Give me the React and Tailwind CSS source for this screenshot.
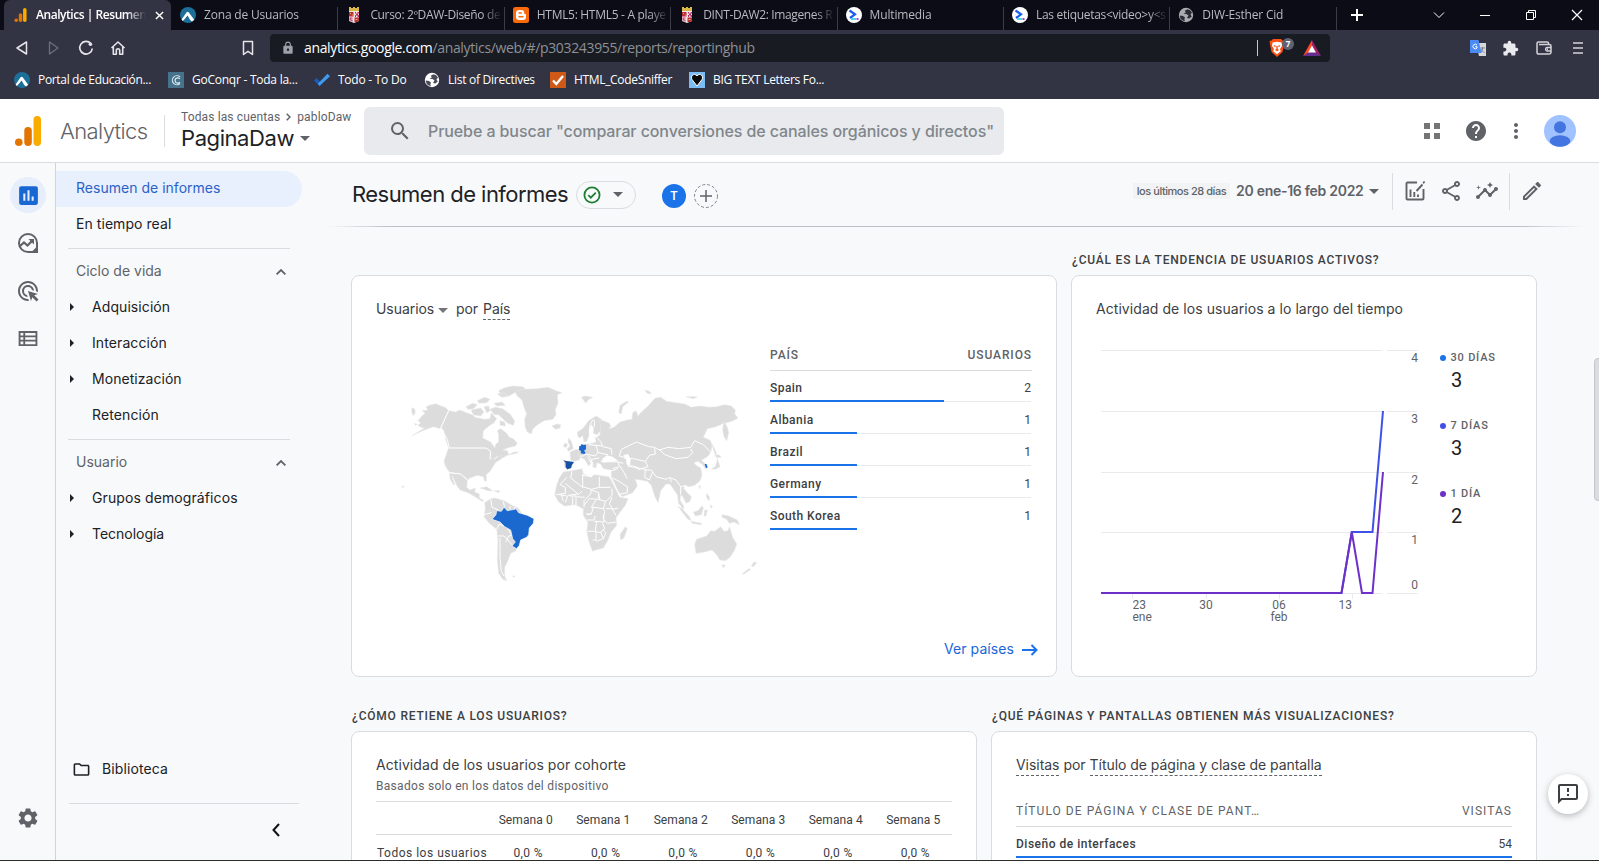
import React from "react";
import {
  MdSearch, MdHelp, MdMoreVert, MdSettings, MdOutlineShare, MdOutlineEdit, MdOutlineFeedback,
  MdAdsClick, MdInsights, MdInsertChart, MdExtension, MdLock, MdOutlineFolder,
} from "react-icons/md";

/* ---------- favicons ---------- */
const AnalyticsMark = ({ className }) => (
  <svg viewBox="0 0 26 30" className={className}>
    <rect x="18.5" y="0" width="7.5" height="30" rx="3.7" fill="#f9ab00" />
    <rect x="9.3" y="11" width="7.5" height="19" rx="3.7" fill="#e37400" />
    <circle cx="3.8" cy="26.2" r="3.8" fill="#e37400" />
  </svg>
);
const Portal = () => (
  <svg viewBox="0 0 16 16" className="size-4 shrink-0">
    <circle cx="8" cy="8" r="8" fill="#1c6f99" />
    <path d="M1.6 12.6 6.6 5.3Q7.6 4 8.7 5.3L14.2 12.8 12 14.6Q9.500 12.500 8.600 10.200L7.600 8.600Q5 12 2.800 14Z" fill="#fff" />
  </svg>
);
const Crest = () => (
  <svg viewBox="0 0 16 16" className="size-4 shrink-0">
    <path d="M3 0h2v1h2V0h2v1h2V0h2v4H3z" fill="#d9b84a" />
    <path d="M3 4h10v10l-5 2-5-2z" fill="#f3e7e2" />
    <path d="M3 5h4.500v4.500H3zM8.500 10.500H13v3l-2 1.500H8.500z" fill="#b92b3b" />
    <path d="M9 5h1v1.500h1.500V5H13v1.500h-1V8h1v2h-1.500V8.500H10V10H9V8h1V6.500H9zM3.500 10.500h3v1h-2v1h2v2h-1v-1h-2z" fill="#b92b6a" />
    <path d="M4 6h1v1H4zM5.800 7.500h1v1h-1zM9.500 12h2v1h-2z" fill="#e8b640" />
  </svg>
);
const Blogger = () => (
  <svg viewBox="0 0 16 16" className="size-4 shrink-0">
    <rect width="16" height="16" rx="2.500" fill="#fb6a0a" />
    <path d="M6 3h2.500a2.700 2.700 0 0 1 2.700 2.700c0 1 .3 1.200 1 1.200.6 0 .8.300.8.900V10a3 3 0 0 1-3 3H6a3 3 0 0 1-3-3V6a3 3 0 0 1 3-3z" fill="#fff" />
    <path d="M6 6h2.300M6 9.800h4" stroke="#fb6a0a" strokeWidth="1.400" strokeLinecap="round" />
  </svg>
);
const Prompt = () => (
  <svg viewBox="0 0 16 16" className="size-4 shrink-0">
    <circle cx="8" cy="8" r="8" fill="#fff" />
    <path d="M3.500 3.500 9 7.300 4 11" fill="none" stroke="#1b5cf0" strokeWidth="2.200" />
    <path d="M5 12h5" stroke="#35d6e0" strokeWidth="1.800" />
    <path d="M10.500 12h2" stroke="#9b2ff0" strokeWidth="1.800" />
  </svg>
);
const Conqr = () => (
  <svg viewBox="0 0 16 16" className="size-4 shrink-0">
    <rect width="16" height="16" fill="#47728c" />
    <path d="M12 5A4.500 4.500 0 1 0 12 11.500M11.800 7A2.600 2.600 0 1 0 11.800 10" fill="none" stroke="#dce8ee" strokeWidth="1.200" />
  </svg>
);
const Todo = () => (
  <svg viewBox="0 0 16 16" className="size-4 shrink-0">
    <path d="M0 8.500 2.500 6 8 11.500 5.500 14z" fill="#1d5bb5" />
    <path d="M5.500 14 3.800 11.800 13.500 1.800 16 4.200z" fill="#3e9bf2" />
  </svg>
);
const Sniffer = () => (
  <svg viewBox="0 0 16 16" className="size-4 shrink-0">
    <rect width="16" height="16" fill="#cf5a18" />
    <path d="M3 8.500 6.300 12 13 4" fill="none" stroke="#fff" strokeWidth="2.400" />
  </svg>
);
const Heart = () => (
  <svg viewBox="0 0 16 16" className="size-4 shrink-0">
    <rect width="16" height="16" fill="#7bbcf5" />
    <path d="M8 14 3 7.500C1 4 5 .5 8 3.800 11 .5 15 4 13 7.500z" fill="#0a0a0a" stroke="#fff" strokeWidth="1" />
  </svg>
);
const Globe = ({ disc, ground }) => (
  <svg viewBox="0 0 16 16" className="size-4 shrink-0">
    <circle cx="8" cy="8" r="7.200" className={disc} />
    <path d="M9.500 2.200 6.800 3.800 7.800 5.500 5.500 7H8.500L10.500 8.500 9 11 11.300 11.500 13.800 9.500 12.500 7.500 14 5.500A6.500 6.500 0 0 0 9.500 2.200zM1.800 8.500 5 9 7 10.500 6.300 12.500 7 14.300A6.300 6.300 0 0 1 1.800 8.500z" className={ground} />
  </svg>
);

const tabs = [
  { icon: <Portal />, text: "Zona de Usuarios", cls: "tracking-[-0.18px]" },
  { icon: <Crest />, text: "Curso: 2ºDAW-Diseño de", cls: "tracking-[-0.35px]" },
  { icon: <Blogger />, text: "HTML5: HTML5 - A playe", cls: "tracking-[-0.3px]" },
  { icon: <Crest />, text: "DINT-DAW2: Imagenes R", cls: "tracking-[-0.36px]" },
  { icon: <Prompt />, text: "Multimedia", cls: "tracking-[-0.15px]" },
  { icon: <Prompt />, text: "Las etiquetas<video>y<s", cls: "tracking-[-0.3px]" },
  { icon: <Globe disc="fill-[#a9abb0]" ground="fill-[#2a2b33]" />, text: "DIW-Esther Cid", cls: "tracking-[-0.2px]" },
];

function TabStrip() {
  return (
    <div className="flex h-[30px] bg-[#0b0c15] pl-1 text-xs">
      <div className="mr-px flex w-[167px] items-center rounded-t-md bg-[#323443] pl-[10px]">
        <AnalyticsMark className="h-[14px] w-[13px]" />
        <span className="ml-[9px] w-[110px] whitespace-nowrap font-semibold tracking-[-0.45px] text-white [mask-image:linear-gradient(to_right,black_82%,transparent)]">Analytics | Resumen</span>
        <svg viewBox="0 0 10 10" className="ml-[9px] size-[9px] stroke-white" strokeWidth="1.600"><path d="M1 1l8 8M9 1 1 9" /></svg>
      </div>
      {tabs.map((t, i) => (
        <div key={i} className="flex w-[166.400px] items-center">
          <div className="flex h-full flex-1 items-center pl-[8px]">
            {t.icon}
            <span className={`ml-2 w-[132px] whitespace-nowrap text-[#b9bac0] [mask-image:linear-gradient(to_right,black_85%,transparent)] ${t.cls}`}>{t.text}</span>
          </div>
          <div className="mt-[7px] h-[23px] w-px bg-[#3c3d44]" />
        </div>
      ))}
      <div className="flex flex-1 items-center pl-[14px] text-white">
        <svg viewBox="0 0 12 12" className="size-3 stroke-white" strokeWidth="2"><path d="M6 0v12M0 6h12" /></svg>
        <svg viewBox="0 0 12 12" className="ml-[70px] size-3" fill="none" stroke="#fff"><path d="M1 3.500 6 8.500 11 3.500" /></svg>
        <svg viewBox="0 0 12 12" className="ml-[34px] size-3" stroke="#fff"><path d="M1 6.500h10" /></svg>
        <svg viewBox="0 0 12 12" className="ml-[34px] size-3" fill="none" stroke="#fff"><path d="M1.500 3.500h7v7h-7zM3.500 3.500v-2h7v7h-2" /></svg>
        <svg viewBox="0 0 12 12" className="ml-[34px] size-3" stroke="#fff" strokeWidth="1.200"><path d="M1 1l10 10M11 1 1 11" /></svg>
      </div>
    </div>
  );
}

function Toolbar() {
  return (
    <div className="flex h-[36px] items-center bg-[#323443] pl-[14px]">
      <svg viewBox="0 0 16 16" className="size-4" fill="none" stroke="#e4e5e9" strokeWidth="1.500" strokeLinejoin="round"><path d="M12.500 2v12L3 8z" /></svg>
      <svg viewBox="0 0 16 16" className="ml-4 size-4" fill="none" stroke="#6d6f7b" strokeWidth="1.300" strokeLinejoin="round"><path d="M3.500 2v12L12 8z" /></svg>
      <svg viewBox="0 0 16 16" className="ml-4 size-4" fill="none" stroke="#e4e5e9" strokeWidth="1.700"><path d="M12.800 3.600A6.300 6.300 0 1 0 14.300 8.500" /><circle cx="12.400" cy="4.200" r="1.800" fill="#e4e5e9" stroke="none" /></svg>
      <svg viewBox="0 0 16 16" className="ml-4 size-4" fill="none" stroke="#e4e5e9" strokeWidth="1.600" strokeLinejoin="round"><path d="M1.500 8 8 2l6.500 6M3.300 7v7.200h3V10.500a1.700 1.700 0 0 1 3.400 0v3.700h3V7" /></svg>
      <svg viewBox="0 0 12 16" className="ml-[116px] h-4 w-3" fill="none" stroke="#e4e5e9" strokeWidth="1.500" strokeLinejoin="round"><path d="M1.500 1.500h9v13L6 11.300l-4.500 3.200z" /></svg>
      <div className="ml-[16px] flex h-7 w-[1060px] items-center rounded bg-[#191b22] pl-[11px]">
        <MdLock className="size-[14px] text-[#9da0a8]" />
        <span className="ml-[9px] whitespace-nowrap text-sm tracking-[-0.35px] text-[#8d9097]"><span className="text-white">analytics.google.com</span>/analytics/web/#/p303243955/reports/reportinghub</span>
        <div className="ml-auto h-4 w-px bg-[#c6c7ca]" />
        <div className="relative ml-[11px] h-[18px] w-[16px]">
          <svg viewBox="0 0 16 18" className="h-[18px] w-4">
            <path d="M4 0h8l1.500 1.500L15.500 2 15 5.500 13.500 13 8 18 2.500 13 1 5.500.5 2l2-.5z" fill="#fb4f14" />
            <path d="M3.500 3.500 8 2.700l4.500.8L13 7l-2 3 .8 2.300L8 15.300 4.200 12.300 5 10 3 7z" fill="#fff" />
            <path d="M4.500 6l2.500.7L6 8.500zM11.500 6 9 6.700l1 1.800zM7.300 7h1.400v3l1.300 1-2 1.300L6 11l1.300-1z" fill="#fb4f14" />
          </svg>
          <span className="absolute left-[13px] top-[-1px] flex h-[12px] w-[12px] items-center justify-center rounded-full bg-[#5f6273] text-[8px] font-bold text-white">7</span>
        </div>
        <svg viewBox="0 0 18 16" className="ml-[18px] mr-[9px] h-4 w-[18px]">
          <path d="M9 0 0 16l9-5z" fill="#ff4724" /><path d="M9 0l9 16-9-5z" fill="#9e1f63" /><path d="M0 16h18l-9-6z" fill="#662d91" /><path d="M9 5.500 5 12.500h8z" fill="#fff" />
        </svg>
      </div>
      <svg viewBox="0 0 16 16" className="ml-[140px] size-4">
        <path d="M6 3h10v13H9z" fill="#d5d7da" /><path d="M0 0h8.500l3 13H0z" fill="#4c8bf5" />
        <path d="M7 5A2.300 2.300 0 1 0 7 8V6.700H5.200" fill="none" stroke="#fff" /><path d="M10.500 8H15M12.700 7v1c0 2-1 3.500-2 4.500M11 9c1 2 2 3 3.500 3.500" stroke="#697079" fill="none" strokeWidth=".8" />
      </svg>
      <MdExtension className="ml-[16px] size-[17px] text-[#e9eaed]" />
      <svg viewBox="0 0 16 16" className="ml-[17px] size-4" fill="none" stroke="#d3d4d9" strokeWidth="1.500"><path d="M12.500 4.500V3.300A1.300 1.300 0 0 0 11.200 2H2.500A1.500 1.500 0 0 0 1 3.500v8.700A1.800 1.800 0 0 0 2.800 14h10.400a1.800 1.800 0 0 0 1.800-1.800V6a1.500 1.500 0 0 0-1.500-1.500H3M15 7.500h-4a1.800 1.800 0 0 0 0 3.500h4M11 9.200h1" /></svg>
      <svg viewBox="0 0 10 12" className="ml-[21px] h-3 w-[10px]" stroke="#d3d4d9" strokeWidth="1.700"><path d="M0 1h10M0 6h10M0 11h10" /></svg>
    </div>
  );
}

const marks = [
  [<Portal />, "Portal de Educación...", "w-[154px]", "tracking-[-0.33px]"],
  [<Conqr />, "GoConqr - Toda la...", "w-[146px]", "tracking-[-0.25px]"],
  [<Todo />, "Todo - To Do", "w-[110px]", "tracking-[-0.25px]"],
  [<Globe disc="fill-white" ground="fill-[#4a4c59]" />, "List of Directives", "w-[126px]", "-ml-px tracking-[-0.27px]"],
  [<Sniffer />, "HTML_CodeSniffer", "w-[139px]", "tracking-[-0.33px]"],
  [<Heart />, "BIG TEXT Letters Fo...", "w-[150px]", "tracking-[-0.3px]"],
];

/* ---------- Analytics chrome ---------- */
const Caret = ({ className }) => (
  <svg viewBox="0 0 10 5" className={`h-[5px] w-[10px] shrink-0 ${className}`}><path d="M0 0h10L5 5z" fill="currentColor" /></svg>
);

function AppHeader() {
  return (
    <header className="flex h-16 shrink-0 items-center border-b border-[#dadce0] bg-white pl-[15px]">
      <AnalyticsMark className="h-[30px] w-[26px]" />
      <span className="ml-[19px] mt-px w-[88px] whitespace-nowrap text-[22px] font-[350] tracking-[-0.6px] text-[#5f6368]">Analytics</span>
      <div className="ml-[16px] h-8 w-px bg-[#dadce0]" />
      <div className="ml-[16px] flex w-[183px] flex-col">
        <div className="flex h-4 items-center whitespace-nowrap font-[Roboto] text-xs tracking-[0.13px] text-[#5f6368]">
          Todas las cuentas
          <svg viewBox="0 0 5 8" className="mx-[6px] h-2 w-[5px]" fill="none" stroke="#5f6368" strokeWidth="1.500"><path d="M.7.700 4 4 .7 7.300" /></svg>
          pabloDaw
        </div>
        <div className="flex h-7 items-center pb-px text-[22px] leading-7 font-[380] tracking-[-0.42px] text-[#202124]">
          <span className="w-[112px] whitespace-nowrap">PaginaDaw</span>
          <Caret className="ml-[7px] mt-px text-[#5f6368]" />
        </div>
      </div>
      <div className="flex h-12 w-[640px] items-center rounded-md bg-[#e8eaed] pl-[24px]">
        <MdSearch className="size-6 text-[#5f6368]" />
        <span className="ml-[16px] whitespace-nowrap text-base font-medium tracking-[-0.09px] text-[#80868b]">Pruebe a buscar "comparar conversiones de canales orgánicos y directos"</span>
      </div>
      <svg viewBox="0 0 16 16" className="ml-[420px] size-4" fill="#757575"><path d="M0 0h6v6H0zM10 0h6v6h-6zM0 10h6v6H0zM10 10h6v6h-6z" /></svg>
      <MdHelp className="ml-6 size-6 text-[#5f6368]" />
      <MdMoreVert className="ml-4 size-6 text-[#5f6368]" />
      <svg viewBox="0 0 32 32" className="ml-4 size-8">
        <circle cx="16" cy="16" r="16" fill="#a0c3ff" />
        <circle cx="16" cy="12.300" r="6" fill="#4374e0" />
        <ellipse cx="16" cy="26" rx="10.300" ry="5.800" fill="#4374e0" />
      </svg>
    </header>
  );
}

function Rail() {
  return (
    <div className="flex w-14 shrink-0 flex-col items-center border-r border-[#d0d3d7] pt-[14px] pl-px">
      <div className="flex size-9 items-center justify-center rounded-full bg-[#e6eefb]"><MdInsertChart className="size-[25px] text-[#1967d2]" /></div>
      <svg viewBox="0 0 24 24" className="mt-[18px] size-6" fill="none" stroke="#5f6368" strokeWidth="2">
        <path d="M12 3a9 9 0 1 0 0 18h9v-9a9 9 0 0 0-9-9z" /><path d="m4 15 4-3.500 3.500 3L17 9" strokeWidth="2.300" /><path d="M12.500 8H18v5.500z" fill="#5f6368" stroke="none" /><path d="M21 17v4h-4z" fill="#5f6368" />
      </svg>
      <MdAdsClick className="mt-[24px] size-6 text-[#5f6368]" />
      <svg viewBox="0 0 20 16" className="mt-[28px] h-[15px] w-5" fill="none" stroke="#5f6368" strokeWidth="2"><path d="M1 1h18v14H1zM1 5.700h18M1 10.300h18M6 1v14" /></svg>
      <MdSettings className="mt-auto mb-[31px] size-6 text-[#5f6368]" />
    </div>
  );
}

const Item = ({ text, arrow, w }) => (
  <div className="flex h-9 items-center pl-[14px] pb-[2px]">
    <svg viewBox="0 0 4 8" className="h-2 w-1">{arrow && <path d="M0 0l4 4-4 4z" fill="#202124" />}</svg>
    <span className={`ml-[18px] ${w}`}>{text}</span>
  </div>
);
const Group = ({ text }) => (
  <div className="flex h-9 w-[235px] items-center justify-between pl-5 pb-[2px] text-[#5f6368]">
    {text}
    <svg viewBox="0 0 10 6" className="mr-[5px] mt-px h-[6px] w-[10px]" fill="none" stroke="#5f6368" strokeWidth="1.800"><path d="M.6 5.400 5 1 9.400 5.400" /></svg>
  </div>
);

function Nav() {
  return (
    <nav className="flex w-[256px] shrink-0 flex-col whitespace-nowrap pt-2 text-sm text-[#202124]">
      <div className="flex h-9 w-[246px] items-center rounded-r-full bg-[#e8f0fe] pl-5 pb-[2px] tracking-[0.02px] text-[#2a62c9]">Resumen de informes</div>
      <div className="flex h-9 items-center pl-5 pb-[2px] tracking-[0.06px]">En tiempo real</div>
      <div className="ml-3 mt-[5px] mb-[5px] h-px w-[222px] bg-[#dadce0]" />
      <Group text="Ciclo de vida" />
      <Item text="Adquisición" arrow w="tracking-[0.08px]" />
      <Item text="Interacción" arrow w="tracking-[0.1px]" />
      <Item text="Monetización" arrow w="tracking-[0.05px]" />
      <Item text="Retención" w="tracking-[0.12px]" />
      <div className="ml-3 mt-[5px] mb-[5px] h-px w-[222px] bg-[#dadce0]" />
      <Group text="Usuario" />
      <Item text="Grupos demográficos" arrow w="tracking-[0.1px]" />
      <Item text="Tecnología" arrow w="tracking-[-0.02px]" />
      <div className="mt-auto flex h-6 items-center pl-4">
        <MdOutlineFolder className="size-[19px]" />
        <span className="ml-[11px] tracking-[0.12px]">Biblioteca</span>
      </div>
      <div className="ml-[13px] mt-[22px] h-px w-[230px] bg-[#dadce0]" />
      <svg viewBox="0 0 8 14" className="mt-[19px] mb-[24px] ml-[216px] h-[14px] w-2" fill="none" stroke="#111" strokeWidth="2"><path d="M7 1 1.500 7 7 13" /></svg>
    </nav>
  );
}

function ReportHeader() {
  return (
    <div className="flex h-[63px] shrink-0 items-center pl-[40px]">
      <span className="w-[215px] whitespace-nowrap text-[22px] font-[380] tracking-[-0.54px] text-[#202124]">Resumen de informes</span>
      <div className="ml-[9px] flex h-7 w-[60px] items-center rounded-full border border-[#dadce0] pl-[6px]">
        <svg viewBox="0 0 18 18" className="size-[18px]" fill="none" stroke="#1e7e34" strokeWidth="1.800"><circle cx="9" cy="9" r="7.600" /><path d="m5.300 9.200 2.500 2.500 5-5" /></svg>
        <Caret className="ml-[12px] text-[#5f6368]" />
      </div>
      <div className="ml-[26px] mt-[2px] flex size-6 items-center justify-center rounded-full bg-[#1a73e8] text-xs font-semibold text-white">T</div>
      <svg viewBox="0 0 24 24" className="ml-2 mt-[2px] size-6" fill="none" stroke="#80868b"><circle cx="12" cy="12" r="11.500" strokeDasharray="3 2" /><path d="M12 6v12M6 12h12" stroke="#5f6368" strokeWidth="1.500" /></svg>
      <div className="ml-auto flex items-center pb-[7px]">
        <span className="flex h-4 w-[97px] items-center justify-center whitespace-nowrap bg-[#f1f3f4] text-[11px] font-medium leading-4 tracking-[-0.45px] text-[#5f6368]">los últimos 28 días</span>
        <span className="ml-[6px] w-[128px] whitespace-nowrap text-sm font-semibold tracking-[-0.28px] text-[#5f6368]">20 ene-16 feb 2022</span>
        <Caret className="ml-[5px] mr-px text-[#5f6368]" />
        <div className="ml-[12px] h-[37px] w-px bg-[#dadce0]" />
        <svg viewBox="0 0 20 20" className="ml-[12px] size-5" fill="none" stroke="#5f6368" strokeWidth="1.900"><path d="M12 1.500H2.500A1 1 0 0 0 1.500 2.500v15a1 1 0 0 0 1 1h15a1 1 0 0 0 1-1V8M5.500 8.500V16M9.300 11v5M13 13.500V16M11.500 10 17.500 3.500" /><path d="m17.500 1 2-1 .5 1.500-1.500 1.500z" fill="#5f6368" stroke="none" /></svg>
        <MdOutlineShare className="ml-[14px] size-6 text-[#5f6368]" />
        <MdInsights className="ml-[12px] size-6 text-[#5f6368]" />
        <div className="ml-[10px] h-[37px] w-px bg-[#dadce0]" />
        <MdOutlineEdit className="ml-[10px] mr-[55px] size-6 text-[#5f6368]" />
      </div>
    </div>
  );
}

/* ---------- world map ---------- */
const land = [
  "M66 227 98 212 130 200 152 206 176 152 165 142 148 136 138 131 120 135 108 141 114 150 96 152 106 160 98 166 84 182 92 188 84 196 96 203 104 204z",
  "M66 143l8 4 2 12-7 8-4-14zM74 190l8 4-6 2z",
  "M176 152 198 156 208 150 234 160 250 166 254 172 284 178 300 176 304 158 312 168 320 176 312 188 300 196 280 212 278 234 302 246 314 264 318 252 326 246 326 222 322 212 332 206 350 220 358 232 370 236 382 250 376 258 352 264 338 270 352 272 356 284 372 276 386 276 378 280 352 286 326 300 322 288 310 298 298 304 302 280 288 270 176 264 168 240 162 212 154 204z",
  "M228 140l20-10 14 4-12 12-16 2zM244 150l28-6 10 12-10 12-22-4zM262 122l22-10 16 6-10 10-22 2zM326 92l16-8 26-6 30 2 8 6-28 10-22 12-20 4 12-10-18-2zM312 130l24-4 10 10-26 2zM300 148l16-6 22 4 24 18 12 20-4 12-16-6-14-12-14-14-12 0zM330 182l14 4 2 12-16-2zM282 140l14-2 4 14-10 6zM322 102l20-4 12 8-18 6z",
  "M376 94 400 88 440 86 474 82 498 92 516 98 502 104 504 130 496 148 498 164 488 178 462 182 440 196 428 208 424 222 412 216 406 202 404 178 410 162 402 142 396 120 380 106z",
  "M176 264H288L300 272 302 296 314 298 324 290 336 286 332 298 316 308 308 322 300 334 288 344 290 362 284 364 280 350 262 346 240 354 232 360 226 352 212 342 178 336 166 318 162 304 168 286z",
  "M178 338 212 342 232 360 230 382 240 390 256 384 254 396 268 402 268 414 282 422 276 424 258 412 234 398 210 390 200 376 190 354 184 346 194 374 190 374 180 356z",
  "M270 384l20-4 18 12-14 0-16-6zM312 392l18 0-4 6z",
  "M284 428 302 416 316 414 346 424 366 436 384 444 400 466 420 470 380 560 378 572 362 580 352 606 344 622 344 648 350 662 338 658 326 640 322 600 324 540 320 508 298 490 282 470 286 448z",
  "M486 198l14-6 12 2-2 10-14 4zM574 112l12-4 22 4-14 8-6 10zM764 90l14 4 6 8-12-2zM888 110l34 0-12 6zM686 158l4-22 20-12 6 2-18 14-4 22z",
  "M520 260l4-10 8 2-2 10zM532 266l8-8-6-12 2-12 8 10 6 22-16 8z",
  "M522 302 552 306 546 318 542 326 530 328 524 322z",
  "M540 276l14-6 12-2 8 14-6 18-16 4-10-4z",
  "M564 230 562 216 578 206 596 182 618 168 634 178 632 196 636 214 622 224 610 220 612 204 604 192 596 212 598 224 590 244 582 246 578 226 570 234z",
  "M568 262 580 252 600 252 618 246 616 232 630 226 632 200 628 180 640 182 658 190 662 198 656 206 672 202 690 186 712 180 726 178 728 158 738 152 744 168 752 158 772 140 796 114 812 112 830 124 858 128 884 132 904 142 930 138 958 142 980 140 1004 134 1024 138 1036 150 1034 162 1044 174 1030 182 1018 186 1000 190 988 196 972 202 952 206 940 232 960 240 966 254 962 280 950 292 934 300 944 310 952 320 946 326 938 314 924 304 912 308 918 316 932 324 936 346 930 362 914 376 896 380 886 376 880 384 892 398 904 410 900 424 888 430 882 416 872 402 870 420 882 440 880 448 866 430 862 404 852 390 840 372 828 372 812 392 808 412 804 428 794 408 784 376 772 364 752 360 736 358 742 378 728 398 696 410 684 392 664 350 664 330 640 326 632 312 620 308 618 324 608 320 606 306 590 288 596 300 602 310 596 318 584 298 572 292 566 282z",
  "M1002 184 1012 202 1016 218 1010 242 1002 230 998 210z",
  "M980 284l4 18 6 18-14 8-12-2 12-6 6-20zM964 250l10 16 6 16-4 2zM974 286l12-2 8 8-14 0zM926 378l6 0-2 8z",
  "M508 354 520 336 546 332 576 326 580 342 604 352 612 344 656 350 662 358 676 386 690 412 714 416 706 436 686 462 678 474 680 496 662 518 654 540 640 564 616 570 608 574 598 548 590 514 594 488 580 466 580 446 556 434 524 438 506 426 494 404 500 376z",
  "M706 500 712 506 702 534 692 540 690 524 698 512z",
  "M864 438l14 10 20 22 6 12-10-4-16-20zM904 484l30 6 0 4-28-4zM910 456l14-4 12-14 4 6-6 20-18 4zM944 450l8 0-4 18-6 0zM996 464l20 4 26 12 6 14-16-8-14 4-8-12-14-6zM950 400l8 10 0 12-8-8zM962 434l6 6-6 4z",
  "M1018 500 1014 512 1002 514 992 500 974 514 962 512 950 528 920 538 914 552 918 580 944 576 966 570 978 582 990 600 1006 602 1020 592 1034 570 1040 552 1028 532 1022 512z",
  "M996 614l10 2-6 8zM1056 642l20-16 6 2-20 14zM1084 618l8-12 8 2-10 12zM368 648l8 0-6 4zM36 376l6 4-4 4z",
];
const seas = ["M700 286l14-4 8 14-2 22-10-4-2-16z", "M636 298l14-12 18 4 16 13-24 3-20 2z"];
const borders = [
  "M176 152l-24 52 20 34 6 26H288l14 10-2 24M176 338l36 4 20 18",
  "M530 352l-20 22 16 8 0 18-28 4M546 334l-4 20 36 28 0-40M578 380l26 8M604 350l-26-4M628 350V382H662M628 382l-24 6-2 14-20 20 0 20M604 390l22 8-2 18M526 370l38 32-30 4-8 22M564 404l12-10M540 408l18 0 0 28M548 412l0 24M560 410l24 2M582 436l16-20 26 2 24 6 18-18 0-20M618 420l-14 22 8 0 28 4 6-20M610 442l-6 20-12 2M640 444l4 10-4 24 12 12 28-4M648 446h18l12 20M604 462h-16M590 480l22 0 4-12M612 484l30 2-2-22M592 514h24l4-32M616 514l14 4 14-12-6-16M608 540l10 0 0-26M618 544l22-8-8-20M640 536l8-18-10-10M666 412l-8 20 12 16 14-4M514 404l6 20M508 404l22 4M630 420l-4-20",
  "M694 268l-6 20 16 4M694 268l46-22 36 14 18 2 14 8 26-8 34 4 34-4 12-20 26 12 22 22-4 16-20 14M808 268l16 16 34 12 36-4 14-14-6-12M794 264l2 18-18 4-12 18-36-8-28-2M766 304l8 16-20 6-32-10M754 326l12 2-2 24 14 8M764 330l20 0 14 20 30 8 12-6 4 14M778 360l10-24M842 354l16 6 14 20 16-4M872 380l0 22M628 216l-8 16 12 12 6 16 26 6 2 18M596 254l22 2 6 20-8 12-28-6M618 256l20 2M624 278l30 6M588 282l-8 6-10 0M594 286l10 12 24-4M604 298l6 20M598 224l2-30 8-14M612 178l2 22M632 304l52 2 4 14-20 6M684 306l16 4M690 318l12 20 10 18M660 334l24-8M684 404l28-6 0-18-28-18-16-8M712 318l22 4 18 8",
  "M302 418l4 24 20 8M282 464l22-6M320 508l8-16 22 10 16 24-10 2-8 18M324 528l18 0 26 28M340 424l4 20M360 438v10M374 440v10M330 534l0 60 4 40 8 14",
];

function WorldMap() {
  return (
    <svg viewBox="0 0 1140 720" className="mt-[84px] ml-[38px] h-[240px] w-[380px] shrink-0">
      {land.map((d, i) => <path key={i} d={d} fill="#dcdcdc" stroke="#e6e6e6" strokeWidth="1.500" strokeLinejoin="round" />)}
      {seas.map((d, i) => <path key={i} d={d} fill="#fff" />)}
      {borders.map((d, i) => <path key={i} d={d} fill="none" stroke="#fff" strokeWidth="3" strokeLinejoin="round" />)}
      <path d="M306 478 318 464 320 452 334 454 342 442 352 452 374 448 378 446 386 458 412 466 432 476 430 490 418 504 416 524 410 532 392 540 388 556 380 566 366 558 376 546 368 536 362 510 344 500 330 486z" fill="#1b68cf" stroke="#fff" strokeWidth="2" />
      <path d="M528 303 552 306 546 314 543 324 532 328 527 322 527 308 520 301z" fill="#184fa3" />
      <path d="M568 258 573 257 574 252 580 255 588 254 588 268 582 272 587 278 583 282 572 280 573 273 567 270z" fill="#1b68cf" />
      <path d="M944 312l5 0 4 10-5 3z" fill="#1b68cf" />
    </svg>
  );
}

const countries = [
  ["Spain", 2, "w-[174px]"], ["Albania", 1, "w-[87px]"], ["Brazil", 1, "w-[87px]"], ["Germany", 1, "w-[87px]"], ["South Korea", 1, "w-[87px]"],
];

function CountryCard() {
  return (
    <section className="flex h-[402px] w-[706px] flex-col rounded-lg border border-[#dadce0] bg-white">
      <div className="flex h-0 flex-1">
        <div className="flex w-[418px] shrink-0 flex-col">
          <div className="-mb-[44px] flex h-[44px] items-start whitespace-nowrap pl-6 pt-[23px] text-sm leading-5 font-[430] tracking-[-0.05px] text-[#3c4043]">
            <span className="w-[59px]">Usuarios</span><Caret className="ml-[3px] mt-[9px] text-[#757575]" /><span className="ml-[8px] w-[27px]">por</span>
            <span className="border-b border-dashed border-[#5f6368]">País</span>
          </div>
          <WorldMap />
        </div>
        <div className="w-[262px] shrink-0 pt-[71px] font-[Roboto]">
          <div className="flex h-[24px] justify-between border-b border-[#dadce0] text-xs leading-4 tracking-[0.9px] font-medium text-[#5f6368]"><span>PAÍS</span><span>USUARIOS</span></div>
          {countries.map(([n, v, w], i) => (
            <div key={n} className="flex h-8 w-[261px] flex-col text-xs text-[#3c4043]">
              <div className="flex h-[29px] items-center justify-between pt-[5px]"><span className="font-medium tracking-[0.45px]">{n}</span><span>{v}</span></div>
              <div className={`flex h-[2px] items-center ${i < 4 ? "bg-[linear-gradient(to_bottom,transparent_50%,#e8eaed_50%)]" : ""}`}><div className={`h-[2px] bg-[#1a73e8] ${w}`} /></div>
            </div>
          ))}
        </div>
      </div>
      <div className="flex h-[53px] items-start justify-end pr-[18px] pt-4 text-sm leading-5 tracking-[0.08px] text-[#1a66d8]">
        Ver países
        <svg viewBox="0 0 16 12" className="ml-[8px] mt-[5px] h-3 w-4" fill="none" stroke="#1a73e8" strokeWidth="2"><path d="M0 6h14.500M9.500 1l5 5-5 5" /></svg>
      </div>
    </section>
  );
}

const legend = [["30 DÍAS", 3, "bg-[#1a73e8]"], ["7 DÍAS", 3, "bg-[#4250e8]"], ["1 DÍA", 2, "bg-[#6d31c9]"]];

function TrendCard() {
  const ys = [350.5, 411.5, 472.5, 532.5, 593.5];
  return (
    <section className="flex h-[402px] w-[466px] flex-col rounded-lg border border-[#dadce0] bg-white pt-[23px]">
      <div className="h-[40px] whitespace-nowrap pl-[24px] text-sm leading-5 font-[430] tracking-[0.06px] text-[#3c4043]">Actividad de los usuarios a lo largo del tiempo</div>
      <div className="flex">
        <svg viewBox="1096 339 330 290" className="ml-[24px] h-[290px] w-[330px] font-[Roboto] text-xs" fill="#5f6368">
          {ys.map((y) => <path key={y} d={`M1101 ${y}H1382.500M1387 ${y}H1417.500`} stroke="#e8eaed" />)}
          {[1132.5, 1206.5, 1279.5, 1352.5].map((x) => <path key={x} d={`M${x} 594v5`} stroke="#e8eaed" />)}
          <path d="M1101 593H1341.500L1351.800 532H1372.500L1383 411" fill="none" stroke="#3f51e6" strokeWidth="2" />
          <path d="M1101 593H1341.500L1351.800 532 1362 593H1372.500L1383 472" fill="none" stroke="#6d31c9" strokeWidth="2" />
          {[[361, 4], [422, 3], [483, 2], [543, 1], [588, 0]].map(([y, t]) => <text key={t} x="1418" y={y + 0.5} textAnchor="end">{t}</text>)}
          <text x="1132.500" y="609">23</text><text x="1132.500" y="621">ene</text>
          <text x="1206" y="609" textAnchor="middle">30</text>
          <text x="1279" y="609" textAnchor="middle">06</text><text x="1279" y="621" textAnchor="middle">feb</text>
          <text x="1352" y="609" textAnchor="end">13</text>
        </svg>
        <div className="flex flex-col gap-[28px] pl-[14px] pt-[11px] font-[Roboto]">
          {legend.map(([t, n, c]) => (
            <div key={t} className="h-[40px]">
              <div className="flex h-4 items-center whitespace-nowrap text-[11px] tracking-[0.8px] font-medium text-[#5f6368]"><span className={`mr-[4.500px] size-[6px] rounded-full ${c}`} />{t}</div>
              <div className="pl-[11px] text-xl leading-7 text-[#202124]">{n}</div>
            </div>
          ))}
        </div>
      </div>
    </section>
  );
}

const weeks = [0, 1, 2, 3, 4, 5];

function CohortCard() {
  return (
    <section className="h-[200px] w-[626px] rounded-lg border border-[#dadce0] bg-white px-6 pt-[23px] text-[#3c4043]">
      <div className="text-sm leading-5 font-[430] tracking-[0.07px]">Actividad de los usuarios por cohorte</div>
      <div className="h-[27px] border-b border-[#dadce0] pt-px font-[Roboto] text-xs leading-5 tracking-[0.3px] text-[#5f6368]">Basados solo en los datos del dispositivo</div>
      <div className="flex h-[33px] items-center border-b border-[#dadce0] pl-[111px] pt-[3px] font-[Roboto] text-xs">
        {weeks.map((w) => <span key={w} className="w-[77.750px] text-center tracking-[0.1px]">Semana {w}</span>)}
      </div>
      <div className="flex h-[35px] items-center pl-[1px] font-[Roboto] text-xs">
        <span className="w-[111px] whitespace-nowrap tracking-[0.5px]">Todos los usuarios</span>
        {weeks.map((w) => <span key={w} className="w-[77.750px] pl-[4px] text-center tracking-[0.35px]">0,0 %</span>)}
      </div>
    </section>
  );
}

function PagesCard() {
  return (
    <section className="h-[200px] w-[546px] rounded-lg border border-[#dadce0] bg-white px-6 pt-[23px] text-[#3c4043]">
      <div className="flex gap-1 whitespace-nowrap text-sm leading-5 font-[430] tracking-[-0.04px]">
        <span className="border-b border-dashed border-[#5f6368]">Visitas</span>por<span className="border-b border-dashed border-[#5f6368]">Título de página y clase de pantalla</span>
      </div>
      <div className="mt-[27px] flex h-[24px] justify-between border-b border-[#dadce0] font-[Roboto] text-xs leading-4 tracking-[1.050px] text-[#5f6368]"><span>TÍTULO DE PÁGINA Y CLASE DE PANT…</span><span>VISITAS</span></div>
      <div className="flex h-[31px] items-center justify-between border-b-2 border-[#1a73e8] pt-[4px] font-[Roboto] text-xs"><span className="font-medium tracking-[0.5px]">Diseño de interfaces</span><span>54</span></div>
    </section>
  );
}

const heading = "whitespace-nowrap font-[Roboto] text-xs leading-4 tracking-[0.79px] font-medium text-[#3c4043]";

export default function App() {
  return (
    <div className="relative flex h-[861px] w-[1599px] flex-col overflow-hidden bg-[#f8f9fb] font-[Inter]">
      <div className="shrink-0 font-['Open_Sans']">
        <TabStrip />
        <Toolbar />
        <div className="flex h-[33px] items-center bg-[#323443] pb-[5px] pl-[14px] text-xs text-white">
          {marks.map(([icon, text, w, cls]) => (
            <div key={text} className={`flex items-center whitespace-nowrap ${w}`}>{icon}<span className={`ml-2 ${cls}`}>{text}</span></div>
          ))}
        </div>
      </div>
      <AppHeader />
      <div className="flex h-0 flex-1">
        <Rail />
        <Nav />
        <main className="flex w-0 flex-1 flex-col">
          <ReportHeader />
          <div className="ml-[14px] h-px w-[1259px] shrink-0 bg-[linear-gradient(to_right,transparent,#bdc1c6_5%,#bdc1c6_95%,transparent)]" />
          <div className={`${heading} mt-[25px] ml-[760px] h-4 shrink-0`}>¿CUÁL ES LA TENDENCIA DE USUARIOS ACTIVOS?</div>
          <div className="ml-[39px] mt-[7px] flex shrink-0 gap-[14px]"><CountryCard /><TrendCard /></div>
          <div className="ml-[40px] mt-[31px] flex h-4 shrink-0">
            <div className={`${heading} w-[640px]`}>¿CÓMO RETIENE A LOS USUARIOS?</div>
            <div className={heading}>¿QUÉ PÁGINAS Y PANTALLAS OBTIENEN MÁS VISUALIZACIONES?</div>
          </div>
          <div className="ml-[39px] mt-[7px] flex shrink-0 gap-[14px]"><CohortCard /><PagesCard /></div>
        </main>
      </div>
      <div className="absolute left-[1548px] top-[774px] flex size-10 items-center justify-center rounded-full bg-white shadow-[0_2px_6px_rgba(60,64,67,0.35)]"><MdOutlineFeedback className="size-6 text-[#3c4043]" /></div>
      <div className="absolute left-[1594px] top-[358px] h-[143px] w-[8px] rounded-l-sm border border-[#c4c6c9] bg-[#dadce0]" />
      <div className="absolute bottom-0 left-0 h-px w-full bg-[#2c2d28]" />
    </div>
  );
}
